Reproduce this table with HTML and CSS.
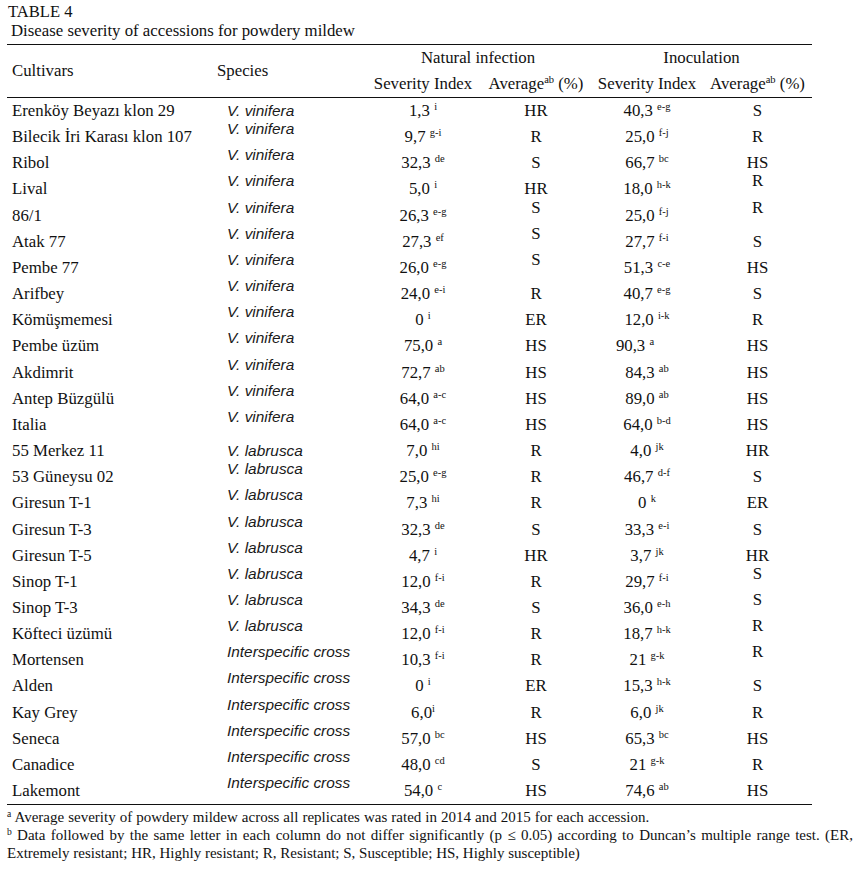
FILE: index.html
```html
<!DOCTYPE html>
<html lang="tr">
<head>
<meta charset="utf-8">
<title>Table 4</title>
<link rel="stylesheet" href="styles.css">
</head>
<body>
<div class="page">
  <div class="title">TABLE 4</div>
  <div class="subtitle">Disease severity of accessions for powdery mildew</div>
  <table class="data">
    <colgroup>
      <col class="c1"><col class="c2"><col class="c3"><col class="c4"><col class="c5"><col class="c6">
    </colgroup>
    <thead>
      <tr>
        <th rowspan="2" class="left cult">Cultivars</th>
        <th rowspan="2" class="left spec">Species</th>
        <th colspan="2">Natural infection</th>
        <th colspan="2">Inoculation</th>
      </tr>
      <tr>
        <th>Severity Index</th>
        <th>Average<sup>ab</sup> (%)</th>
        <th>Severity Index</th>
        <th>Average<sup>ab</sup> (%)</th>
      </tr>
    </thead>
    <tbody>
      <tr><td class="cult">Erenköy Beyazı klon 29</td><td class="sp">V. vinifera</td><td>1,3 <sup>i</sup></td><td>HR</td><td>40,3 <sup>e-g</sup></td><td>S</td></tr>
      <tr><td class="cult">Bilecik İri Karası klon 107</td><td class="sp hi">V. vinifera</td><td>9,7 <sup>g-i</sup></td><td>R</td><td>25,0 <sup>f-j</sup></td><td>R</td></tr>
      <tr><td class="cult">Ribol</td><td class="sp hi">V. vinifera</td><td>32,3 <sup>de</sup></td><td>S</td><td>66,7 <sup>bc</sup></td><td>HS</td></tr>
      <tr><td class="cult">Lival</td><td class="sp hi">V. vinifera</td><td>5,0 <sup>i</sup></td><td>HR</td><td>18,0 <sup>h-k</sup></td><td class="hi">R</td></tr>
      <tr><td class="cult">86/1</td><td class="sp hi">V. vinifera</td><td>26,3 <sup>e-g</sup></td><td class="hi">S</td><td>25,0 <sup>f-j</sup></td><td class="hi">R</td></tr>
      <tr><td class="cult">Atak 77</td><td class="sp hi">V. vinifera</td><td>27,3 <sup>ef</sup></td><td class="hi">S</td><td>27,7 <sup>f-i</sup></td><td>S</td></tr>
      <tr><td class="cult">Pembe 77</td><td class="sp hi">V. vinifera</td><td>26,0 <sup>e-g</sup></td><td class="hi">S</td><td>51,3 <sup>c-e</sup></td><td>HS</td></tr>
      <tr><td class="cult">Arifbey</td><td class="sp hi">V. vinifera</td><td>24,0 <sup>e-i</sup></td><td>R</td><td>40,7 <sup>e-g</sup></td><td>S</td></tr>
      <tr><td class="cult">Kömüşmemesi</td><td class="sp hi">V. vinifera</td><td>0 <sup>i</sup></td><td>ER</td><td>12,0 <sup>i-k</sup></td><td>R</td></tr>
      <tr><td class="cult">Pembe üzüm</td><td class="sp hi">V. vinifera</td><td>75,0 <sup>a</sup></td><td>HS</td><td class="shl">90,3 <sup>a</sup></td><td>HS</td></tr>
      <tr><td class="cult">Akdimrit</td><td class="sp hi">V. vinifera</td><td>72,7 <sup>ab</sup></td><td>HS</td><td>84,3 <sup>ab</sup></td><td>HS</td></tr>
      <tr><td class="cult">Antep Büzgülü</td><td class="sp hi">V. vinifera</td><td>64,0 <sup>a-c</sup></td><td>HS</td><td>89,0 <sup>ab</sup></td><td>HS</td></tr>
      <tr><td class="cult">Italia</td><td class="sp hi">V. vinifera</td><td>64,0 <sup>a-c</sup></td><td>HS</td><td>64,0 <sup>b-d</sup></td><td>HS</td></tr>
      <tr><td class="cult">55 Merkez 11</td><td class="sp">V. labrusca</td><td>7,0 <sup>hi</sup></td><td>R</td><td>4,0 <sup>jk</sup></td><td>HR</td></tr>
      <tr><td class="cult">53 Güneysu 02</td><td class="sp hi">V. labrusca</td><td>25,0 <sup>e-g</sup></td><td>R</td><td>46,7 <sup>d-f</sup></td><td>S</td></tr>
      <tr><td class="cult">Giresun T-1</td><td class="sp hi">V. labrusca</td><td>7,3 <sup>hi</sup></td><td>R</td><td>0 <sup>k</sup></td><td>ER</td></tr>
      <tr><td class="cult">Giresun T-3</td><td class="sp hi">V. labrusca</td><td>32,3 <sup>de</sup></td><td>S</td><td>33,3 <sup>e-i</sup></td><td>S</td></tr>
      <tr><td class="cult">Giresun T-5</td><td class="sp hi">V. labrusca</td><td>4,7 <sup>i</sup></td><td>HR</td><td>3,7 <sup>jk</sup></td><td>HR</td></tr>
      <tr><td class="cult">Sinop T-1</td><td class="sp hi">V. labrusca</td><td>12,0 <sup>f-i</sup></td><td>R</td><td>29,7 <sup>f-i</sup></td><td class="hi">S</td></tr>
      <tr><td class="cult">Sinop T-3</td><td class="sp hi">V. labrusca</td><td>34,3 <sup>de</sup></td><td>S</td><td>36,0 <sup>e-h</sup></td><td class="hi">S</td></tr>
      <tr><td class="cult">Köfteci üzümü</td><td class="sp hi">V. labrusca</td><td>12,0 <sup>f-i</sup></td><td>R</td><td>18,7 <sup>h-k</sup></td><td class="hi">R</td></tr>
      <tr><td class="cult">Mortensen</td><td class="sp hi">Interspecific cross</td><td>10,3 <sup>f-i</sup></td><td>R</td><td>21 <sup>g-k</sup></td><td class="hi">R</td></tr>
      <tr><td class="cult">Alden</td><td class="sp hi">Interspecific cross</td><td>0 <sup>i</sup></td><td>ER</td><td>15,3 <sup>h-k</sup></td><td>S</td></tr>
      <tr><td class="cult">Kay Grey</td><td class="sp hi">Interspecific cross</td><td>6,0<sup>i</sup></td><td>R</td><td>6,0 <sup>jk</sup></td><td>R</td></tr>
      <tr><td class="cult">Seneca</td><td class="sp hi">Interspecific cross</td><td>57,0 <sup>bc</sup></td><td>HS</td><td>65,3 <sup>bc</sup></td><td>HS</td></tr>
      <tr><td class="cult">Canadice</td><td class="sp hi">Interspecific cross</td><td>48,0 <sup>cd</sup></td><td>S</td><td>21 <sup>g-k</sup></td><td>R</td></tr>
      <tr><td class="cult">Lakemont</td><td class="sp hi">Interspecific cross</td><td>54,0 <sup>c</sup></td><td>HS</td><td>74,6 <sup>ab</sup></td><td>HS</td></tr>
    </tbody>
  </table>
  <div class="notes">
    <p class="note first"><sup>a</sup> Average severity of powdery mildew across all replicates was rated in 2014 and 2015 for each accession.</p>
    <p class="note just"><sup>b</sup> Data followed by the same letter in each column do not differ significantly (p ≤ 0.05) according to Duncan’s multiple range test. (ER, Extremely resistant; HR, Highly resistant; R, Resistant; S, Susceptible; HS, Highly susceptible)</p>
  </div>
</div>
</body>
</html>
```

FILE: styles.css
```css
html, body {
  margin: 0;
  padding: 0;
  background: #ffffff;
}

body {
  font-family: "Liberation Serif", "Times New Roman", serif;
  color: #111111;
}

.page {
  padding: 2px 4px 0 7px;
}

.title {
  font-size: 16.6px;
  line-height: 19px;
  margin-left: 1px;
}

.subtitle {
  font-size: 16.8px;
  line-height: 19px;
  margin-left: 4px;
  margin-bottom: 4px;
}

.data {
  border-collapse: collapse;
  table-layout: fixed;
  width: 805px;
  border-top: 1px solid #111111;
  border-bottom: 1px solid #111111;
  font-size: 16.8px;
}

.c1 { width: 205px; }
.c2 { width: 153px; }
.c3 { width: 116px; }
.c4 { width: 110px; }
.c5 { width: 112px; }
.c6 { width: 109px; }

.data thead {
  border-bottom: 1px solid #111111;
}

.data th {
  font-weight: normal;
  text-align: center;
  padding: 0;
  height: 26px;
  line-height: 26px;
  white-space: nowrap;
}

.data th.left {
  text-align: left;
}

.data th.cult {
  padding-left: 5px;
}

.data th.spec {
  padding-left: 5px;
}

.data tbody tr {
  height: 26.15px;
}

.data td {
  padding: 0;
  text-align: center;
  vertical-align: top;
  line-height: 26.15px;
  white-space: nowrap;
}

.data td.cult {
  text-align: left;
  padding-left: 5px;
}

.data td.sp {
  text-align: left;
  padding-left: 15px;
  font-family: "Liberation Sans", Arial, sans-serif;
  font-style: italic;
  font-size: 15.4px;
  color: #1a1a1a;
}

.data td.hi {
  line-height: 10px;
}

.data td.shl {
  padding-right: 24px;
}

sup {
  font-size: 10.5px;
  line-height: 0;
  vertical-align: 6px;
}

.notes {
  margin-top: 3px;
}

.note {
  margin: 0;
  font-size: 15px;
  line-height: 18px;
  width: 846px;
}

.note sup {
  font-size: 9.5px;
  vertical-align: 5px;
}

.note.first {
  word-spacing: 0.3px;
}

.note.just {
  text-align: justify;
}
```
